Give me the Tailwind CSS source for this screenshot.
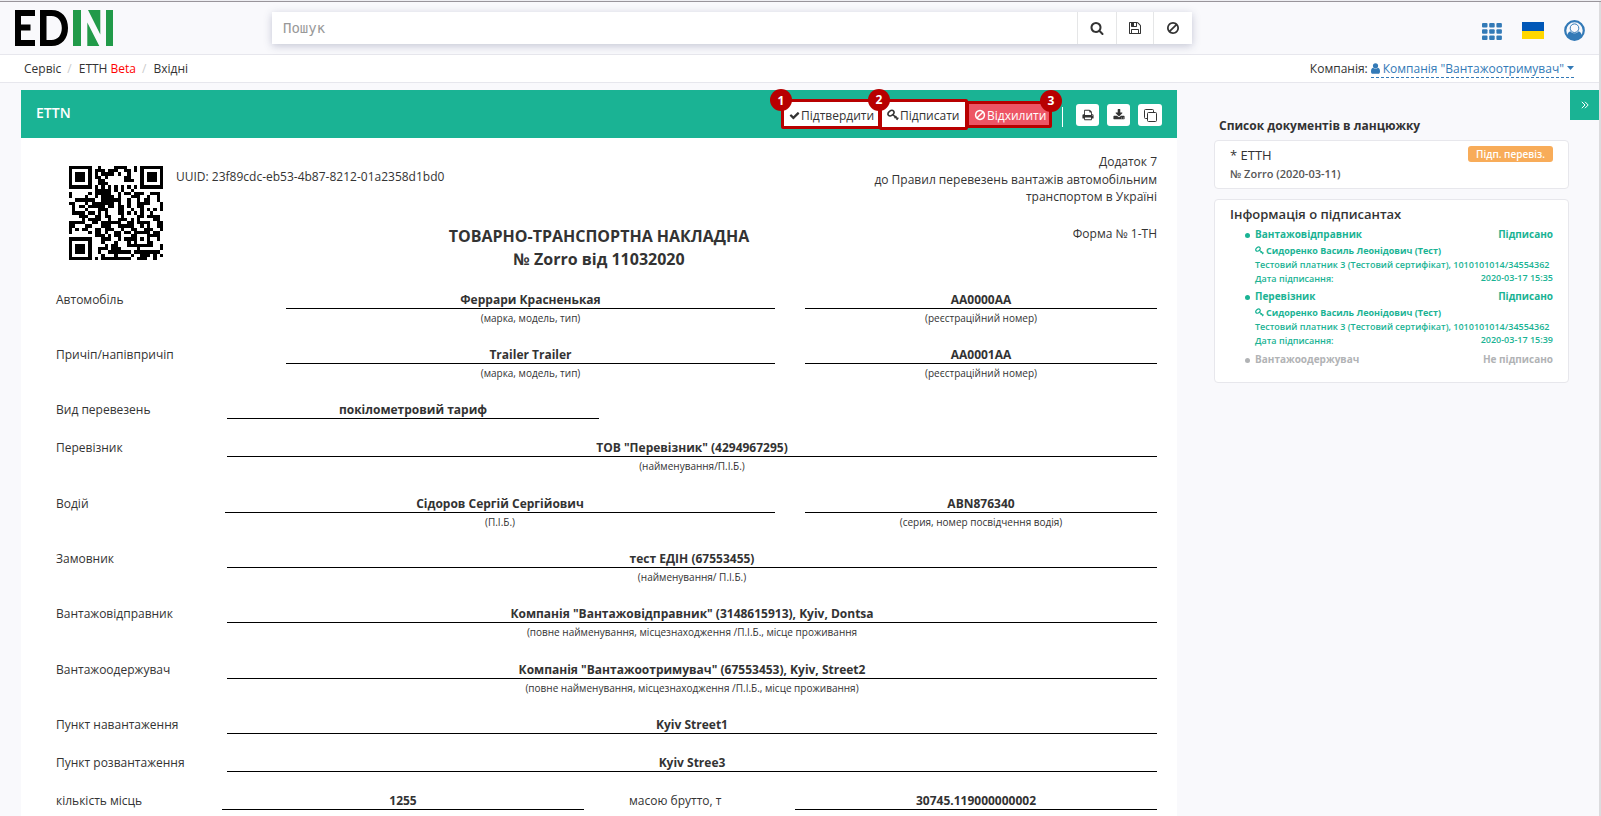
<!DOCTYPE html>
<html lang="uk">
<head>
<meta charset="utf-8">
<title>EDIN</title>
<script src="https://cdn.jsdelivr.net/npm/@tailwindcss/browser@4"></script>
</head>
<body class="h-[816px] overflow-hidden bg-[#f9f9fc] font-['Open_Sans','Noto_Sans',sans-serif] text-[12px] leading-[17px] text-[#333]">
<svg class="hidden">
  <symbol id="check" viewBox="0 0 1792 1792"><path d="M1671 566q0 40-28 68l-724 724-136 136q-28 28-68 28t-68-28l-136-136-362-362q-28-28-28-68t28-68l136-136q28-28 68-28t68 28l294 295 656-657q28-28 68-28t68 28l136 136q28 28 28 68z"/></symbol>
  <symbol id="ban" viewBox="0 0 1792 1792"><path d="M1440 893q0-161-87-295l-754 753q137 89 297 89 111 0 211.500-43.500t173.500-116.500 116-174.500 43-212.500zm-999 299l755-754q-135-91-300-91-148 0-273 73t-198 199-73 274q0 162 89 299zm1223-299q0 157-61 300t-163.500 246-245 164-298.500 61-298.500-61-245-164-163.500-246-61-300 61-299.500 163.500-245.500 245-164 298.500-61 298.500 61 245 164 163.500 245.500 61 299.500z"/></symbol>
  <symbol id="search" viewBox="0 0 1792 1792"><path d="M1216 832q0-185-131.500-316.500t-316.500-131.500-316.500 131.500-131.500 316.500 131.500 316.500 316.500 131.500 316.500-131.500 131.500-316.500zm512 832q0 52-38 90t-90 38q-54 0-90-38l-343-342q-179 124-399 124-143 0-273.500-55.500t-225-150-150-225-55.500-273.500 55.500-273.500 150-225 225-150 273.500-55.500 273.500 55.500 225 150 150 225 55.500 273.500q0 220-124 399l343 343q37 37 37 90z"/></symbol>
  <symbol id="save" viewBox="0 0 1792 1792"><path d="M512 1536h768v-384h-768v384zm896 0h128v-896q0-14-10-38.500t-20-34.500l-281-281q-10-10-34-20t-39-10v416q0 40-28 68t-68 28h-576q-40 0-68-28t-28-68v-416h-128v1280h128v-416q0-40 28-68t68-28h832q40 0 68 28t28 68v416zm-384-928v-320q0-13-9.500-22.500t-22.500-9.500h-192q-13 0-22.500 9.500t-9.500 22.500v320q0 13 9.500 22.500t22.500 9.500h192q13 0 22.500-9.500t9.500-22.500zm640 32v928q0 40-28 68t-68 28h-1344q-40 0-68-28t-28-68v-1344q0-40 28-68t68-28h928q40 0 88 20t76 48l280 280q28 28 48 76t20 88z"/></symbol>
  <symbol id="print" viewBox="0 0 1792 1792"><path d="M448 1536h896v-256h-896v256zm0-640h896v-384h-160q-40 0-68-28t-28-68v-160h-640v640zm1152 64q0-26-19-45t-45-19-45 19-19 45 19 45 45 19 45-19 19-45zm128 0v416q0 13-9.500 22.500t-22.500 9.500h-224v160q0 40-28 68t-68 28h-960q-40 0-68-28t-28-68v-160h-224q-13 0-22.500-9.500t-9.500-22.500v-416q0-79 56.500-135.500t135.500-56.500h64v-544q0-40 28-68t68-28h672q40 0 88 20t76 48l152 152q28 28 48 76t20 88v256h64q79 0 135.500 56.500t56.500 135.500z"/></symbol>
  <symbol id="download" viewBox="0 0 1792 1792"><path d="M1344 1344q0-26-19-45t-45-19-45 19-19 45 19 45 45 19 45-19 19-45zm256 0q0-26-19-45t-45-19-45 19-19 45 19 45 45 19 45-19 19-45zm128-224v320q0 40-28 68t-68 28h-1472q-40 0-68-28t-28-68v-320q0-40 28-68t68-28h465l135 136q58 56 136 56t136-56l136-136h464q40 0 68 28t28 68zm-325-569q17 41-14 70l-448 448q-18 19-45 19t-45-19l-448-448q-31-29-14-70 17-39 59-39h256v-448q0-26 19-45t45-19h256q26 0 45 19t19 45v448h256q42 0 59 39z"/></symbol>
  <symbol id="key" viewBox="0 0 12 12"><g fill="none" stroke="currentColor"><ellipse cx="4" cy="4.200" rx="3.300" ry="2.300" transform="rotate(-40 4 4.200)" stroke-width="1.600"/><path d="M5.800 5.600l5 4.400" stroke-width="1.500"/><path d="M11.300 8.600L9.600 10.900M9.300 7L7.600 9.200" stroke-width="1.400"/></g></symbol>
</svg>

<div class="h-px bg-[#eeeef2]"></div>
<div class="h-px bg-[#99959b]"></div>
<div class="flex h-[814px] flex-col border-r-2 border-[#dcdcde]">

  <header class="flex h-[53px] shrink-0 items-start border-b border-[#e7e7ed] bg-[#f9f9fc] pl-[15px] pr-[14px]">
    <svg class="mt-2 shrink-0" width="98" height="36" viewBox="0 0 98 36">
      <path d="M0 0h20v6H6v8.500h9.500v6H6V30h14v6H0zM25 0h11.500C47 0 53 7.500 53 18s-6 18-16.500 18H25zM31.500 6v24h5c6.500 0 10.300-5 10.300-12S43 6 36.500 6z" fill="#000"/>
      <path d="M58 0h8v36h-8zM91 0h7v36h-7zM73 0h12.300v24.500zM72.300 12.500L84.300 36h-12z" fill="#219a49"/>
    </svg>
    <div class="ml-[159px] mt-[10px] flex h-8 w-[920px] divide-x divide-[#e5e6e7] bg-white shadow-[0_2px_8px_rgba(60,70,110,0.28)]">
      <div class="flex-1 pl-[11px] font-['DejaVu_Sans_Mono','Liberation_Mono',monospace] text-[14px] leading-8 text-[#999]">Пошук</div>
      <div class="flex w-[39px] items-center justify-center"><svg class="size-[14px]" fill="currentColor"><use href="#search"/></svg></div>
      <div class="flex w-[37px] items-center justify-center"><svg class="size-[14px]" fill="currentColor"><use href="#save"/></svg></div>
      <div class="flex w-[38px] items-center justify-center"><svg class="size-[14px]" fill="currentColor"><use href="#ban"/></svg></div>
    </div>
    <div class="ml-auto mt-[19px] flex items-center">
      <svg width="20" height="17" viewBox="0 0 20 17" fill="#337ab7"><rect width="5.500" height="4.500" rx="1"/><rect x="7.200" width="5.500" height="4.500" rx="1"/><rect x="14.400" width="5.500" height="4.500" rx="1"/><rect y="6.200" width="5.500" height="4.500" rx="1"/><rect x="7.200" y="6.200" width="5.500" height="4.500" rx="1"/><rect x="14.400" y="6.200" width="5.500" height="4.500" rx="1"/><rect y="12.400" width="5.500" height="4.500" rx="1"/><rect x="7.200" y="12.400" width="5.500" height="4.500" rx="1"/><rect x="14.400" y="12.400" width="5.500" height="4.500" rx="1"/></svg>
      <div class="-mt-[2px] ml-5 h-[17px] w-[22px] bg-[linear-gradient(#0057b7_50%,#ffd700_50%)]"></div>
      <svg class="-mt-px ml-5" width="21" height="21" viewBox="0 0 21 21"><circle cx="10.500" cy="10.500" r="9.300" fill="none" stroke="#337ab7" stroke-width="2.200"/><path d="M3 15.500c.8-2.800 2-4 3.400-4.300 2.300 2.800 5.900 2.800 8.200 0 1.400.3 2.600 1.500 3.400 4.300-1.800 2.900-4.400 4.500-7.500 4.500S4.800 18.400 3 15.500z" fill="#337ab7"/><circle cx="10.500" cy="8.200" r="4.300" fill="#f9f9fc" stroke="#337ab7" stroke-width="1"/></svg>
    </div>
  </header>

  <nav class="flex h-7 shrink-0 items-center justify-between border-b border-[#e7e7ed] bg-white pl-6 pr-[25px]">
    <div class="flex">
      <span>Сервіс</span><span class="ml-[6px] text-[#ccc]">/</span>
      <span class="ml-[7px]">ЕТТН <span class="text-[#f00]">Beta</span></span><span class="ml-[6px] text-[#ccc]">/</span>
      <span class="ml-[7px]">Вхідні</span>
    </div>
    <div class="flex">
      <span>Компанія:</span>
      <span class="ml-[3px] flex h-[18px] items-center border-b border-dashed border-[#337ab7] text-[#337ab7]">
        <svg class="mr-[3px]" width="9" height="11" viewBox="0 0 9 11" fill="currentColor"><circle cx="4.500" cy="2.800" r="2.600"/><path d="M2 4.800c1.500 1.400 3.500 1.400 5 0 1.400.3 2 1.700 2 3.700 0 1.500-.7 2.300-1.700 2.300H1.700C.7 10.800 0 10 0 8.500c0-2 .6-3.400 2-3.700z"/></svg>
        Компанія "Вантажоотримувач"
        <svg class="ml-[3px]" width="7" height="4" viewBox="0 0 7 4" fill="currentColor"><path d="M0 0h7L3.500 4z"/></svg>
      </span>
    </div>
  </nav>

  <div class="flex flex-1 items-start pl-[21px] pt-[7px]">
    <main class="h-[726px] w-[1156px] shrink-0 bg-white">
      <div class="relative flex h-12 items-center bg-[#1ab394] pl-[15px] pr-[15px]">
        <h1 class="-mt-[3px] text-[14px] font-semibold text-white">ETTN</h1>
        <div class="relative ml-auto flex h-[31px] items-center">
          <div class="relative flex h-[30px] w-[100px] items-center rounded-[2px] border-[3px] border-[#b80000] bg-white pl-[5px] pt-[2px]">
            <svg class="mr-[1px] size-[11px]" fill="currentColor"><use href="#check"/></svg>Підтвердити
            <b class="absolute -left-[14px] -top-[13px] z-10 flex size-[22px] items-center justify-center rounded-full bg-[#b80000] text-[12px] text-white">1</b>
          </div>
          <div class="relative -ml-[2px] flex h-[31px] w-[89px] items-center rounded-[2px] border-[3px] border-[#b80000] bg-white pl-[5px] pt-[2px]">
            <svg class="mr-[1px] size-3"><use href="#key"/></svg>Підписати
            <b class="absolute -left-[14px] -top-[13px] z-10 flex size-[22px] items-center justify-center rounded-full bg-[#b80000] text-[12px] text-white">2</b>
          </div>
          <div class="relative -ml-[2px] flex h-[27px] w-[86px] items-center rounded-[2px] border-[3px] border-[#b80000] bg-[#ed5565] pl-[5px] pt-[2px] text-white">
            <svg class="mr-[1px] size-3" fill="currentColor"><use href="#ban"/></svg>Відхилити
            <b class="absolute -right-[13px] -top-[14px] z-10 flex size-[22px] items-center justify-center rounded-full bg-[#b80000] text-[12px] text-white">3</b>
          </div>
        </div>
        <div class="ml-[10px] mt-[5px] h-5 w-px bg-white"></div>
        <div class="ml-[13px] mt-[2px] flex gap-2">
          <div class="flex h-[22px] w-[23px] items-center justify-center rounded-[3px] bg-white"><svg class="size-3" fill="currentColor"><use href="#print"/></svg></div>
          <div class="flex h-[22px] w-[23px] items-center justify-center rounded-[3px] bg-white"><svg class="size-3" fill="currentColor"><use href="#download"/></svg></div>
          <div class="flex h-[22px] w-6 items-center justify-center rounded-[3px] bg-white"><svg width="13" height="13" viewBox="0 0 13 13" fill="none" stroke="#333"><rect x="3.500" y="3.500" width="9" height="9" rx="1"/><path d="M3.500 9.500h-2a1 1 0 0 1-1-1v-7a1 1 0 0 1 1-1h7a1 1 0 0 1 1 1v2"/></svg></div>
        </div>
      </div>

      <div class="px-[35px] pr-5">
        <div class="flex h-[87px]">
          <div class="w-[107px] shrink-0 pl-[13px] pt-7"><svg width="94" height="94" viewBox="0 0 29 29" shape-rendering="crispEdges"><path id="qr"/></svg></div>
          <div class="pl-[13px] pt-[30px]">UUID: 23f89cdc-eb53-4b87-8212-01a2358d1bd0</div>
          <div class="ml-auto w-[300px] pt-[15px] text-right leading-[17.500px]">Додаток 7<br>до Правил перевезень вантажів автомобільним транспортом в Україні</div>
        </div>
        <div class="flex h-[64px]">
          <h2 class="ml-[343px] w-[400px] text-center text-[16px] font-bold leading-[23px]">ТОВАРНО-ТРАНСПОРТНА НАКЛАДНА<br>№ Zorro від 11032020</h2>
          <div class="flex-1 text-right">Форма № 1-ТН</div>
        </div>

        <div id="rows"></div>
      </div>
    </main>

    <aside class="ml-[37px] w-[355px] shrink-0 pt-[27px]">
      <h3 class="pl-[5px] font-bold">Список документів в ланцюжку</h3>
      <div class="mt-[6px] flex h-[49px] justify-between rounded-[4px] border border-[#e7e7ec] bg-white pl-[15px] pr-[15px] pt-[5px]">
        <div>
          <div class="text-[13px] font-medium leading-[19px]">* ЕТТН</div>
          <div class="text-[11px] font-semibold text-[#555]">№ Zorro (2020-03-11)</div>
        </div>
        <div class="flex h-4 w-[85px] items-center justify-center rounded-[3px] bg-[#f8ac59] text-[10px] font-semibold text-white">Підп. перевіз.</div>
      </div>
      <div class="mt-[10px] h-[184px] rounded-[4px] border border-[#e7e7ec] bg-white px-[15px] pt-[5px]">
        <h4 class="text-[13px] font-semibold leading-[18px]">Інформація о підписантах</h4>
        <ul id="signers" class="mt-[3px] pl-[15px] text-[#1ab394]"></ul>
      </div>
    </aside>
    <div class="ml-px flex h-[30px] w-[29px] shrink-0 items-center justify-center bg-[#1ab394] text-white"><svg width="8" height="8" viewBox="0 0 8 8" fill="none" stroke="currentColor"><path d="M.8.8L4 4 .8 7.200M4 .8L7.200 4 4 7.200"/></svg></div>
  </div>
</div>

<script>
// Form rows: [row height, label, label width, cells: [left margin, width, value, caption]]
const rows = [
  [55, 'Автомобіль', 230, [[0, 489, 'Феррари Красненькая', '(марка, модель, тип)'], [30, 352, 'AA0000AA', '(реєстраційний номер)']]],
  [55, 'Причіп/напівпричіп', 230, [[0, 489, 'Trailer Trailer', '(марка, модель, тип)'], [30, 352, 'AA0001AA', '(реєстраційний номер)']]],
  [38, 'Вид перевезень', 171, [[0, 372, 'покілометровий тариф', '']]],
  [56, 'Перевізник', 171, [[0, 930, 'ТОВ "Перевізник" (4294967295)', '(найменування/П.І.Б.)']]],
  [55, 'Водій', 169, [[0, 550, 'Сідоров Сергій Сергійович', '(П.І.Б.)'], [30, 352, 'ABN876340', '(серия, номер посвідчення водія)']]],
  [55, 'Замовник', 171, [[0, 930, 'тест ЕДІН (67553455)', '(найменування/ П.І.Б.)']]],
  [56, 'Вантажовідправник', 171, [[0, 930, 'Компанія "Вантажовідправник" (3148615913), Kyiv, Dontsa', '(повне найменування, місцезнаходження /П.І.Б., місце проживання']]],
  [55, 'Вантажоодержувач', 171, [[0, 930, 'Компанія "Вантажоотримувач" (67553453), Kyiv, Street2', '(повне найменування, місцезнаходження /П.І.Б., місце проживання)']]],
  [38, 'Пункт навантаження', 171, [[0, 930, 'Kyiv Street1', '']]],
  [38, 'Пункт розвантаження', 171, [[0, 930, 'Kyiv Stree3', '']]],
  [38, 'кількість місць', 166, [[0, 362, '1255', ''], [45, 166, null, 'масою брутто, т'], [0, 362, '30745.119000000002', '']]],
];
document.getElementById('rows').innerHTML = rows.map(([h, label, lw, cells]) =>
  `<div class="flex" style="height:${h}px"><div class="shrink-0 pt-[2px]" style="width:${lw}px">${label}</div>` +
  cells.map(([ml, w, v, cap]) => v === null
    ? `<div class="shrink-0 pt-[2px]" style="width:${w}px;margin-left:${ml}px">${cap}</div>`
    : `<div class="shrink-0 text-center" style="width:${w}px;margin-left:${ml}px"><div class="h-5 border-b border-black pt-[2px] font-bold">${v}</div><div class="pt-[1px] text-[10px]">${cap}</div></div>`).join('') +
  '</div>').join('');

const signed = (role, date) => `<li class="h-[62px] pl-[10px]">
  <div class="relative flex justify-between text-[10px] font-bold leading-[17px]"><i class="absolute -left-[10px] top-[7px] size-[5px] rounded-full bg-[#1ab394]"></i><span>${role}</span><span>Підписано</span></div>
  <div class="flex h-[14px] items-center text-[9px] font-bold"><svg class="mr-[2px] size-[9px]"><use href="#key"/></svg>Сидоренко Василь Леонідович (Тест)</div>
  <div class="text-[9px] font-semibold leading-[15px]">Тестовий платник 3 (Тестовий сертифікат), 1010101014/34554362</div>
  <div class="flex justify-between text-[9px] font-semibold leading-[14px]"><span>Дата підписання:</span><span class="-mt-px">${date}</span></div></li>`;
document.getElementById('signers').innerHTML = signed('Вантажовідправник', '2020-03-17 15:35') + signed('Перевізник', '2020-03-17 15:39') +
  `<li class="relative flex justify-between pl-[10px] pt-px text-[10px] font-bold text-[#b1b3b5]"><i class="absolute left-0 top-2 size-[5px] rounded-full bg-[#b1b3b5]"></i><span>Вантажоодержувач</span><span>Не підписано</span></li>`;

// QR code, version 3 (29 modules), single error correction block
function qr(text, ecBits, ecLen, mask) {
  const N = 29, dl = 70 - ecLen;
  let bits = '0100' + text.length.toString(2).padStart(8, '0');
  for (const c of text) bits += c.charCodeAt(0).toString(2).padStart(8, '0');
  bits += '0000';
  const d = bits.match(/.{8}/g).map(b => parseInt(b, 2));
  for (let i = 0; d.length < dl; i++) d.push(i % 2 ? 17 : 236);
  const E = [], L = [];
  for (let i = 0, x = 1; i < 255; i++) { E[i] = x; L[x] = i; x <<= 1; if (x > 255) x ^= 285; }
  const mul = (a, b) => a && b ? E[(L[a] + L[b]) % 255] : 0;
  let g = [1];
  for (let i = 0; i < ecLen; i++) { const n = [...g, 0]; for (let j = 0; j < g.length; j++) n[j + 1] ^= mul(g[j], E[i]); g = n; }
  const r = [...d, ...Array(ecLen).fill(0)];
  for (let i = 0; i < dl; i++) { const f = r[i]; for (let j = 0; j < g.length; j++) r[i + j] ^= mul(g[j], f); }
  const all = [...d, ...r.slice(dl)].map(v => v.toString(2).padStart(8, '0')).join('');
  const M = Array.from({length: N}, () => Array(N).fill(null));
  const finder = (r0, c0) => { for (let r = -1; r < 8; r++) for (let c = -1; c < 8; c++) { const y = r0 + r, x = c0 + c; if (y < 0 || x < 0 || y >= N || x >= N) continue; const k = Math.max(Math.abs(r - 3), Math.abs(c - 3)); M[y][x] = k != 2 && k < 4 ? 1 : 0; } };
  finder(0, 0); finder(0, N - 7); finder(N - 7, 0);
  for (let r = -2; r < 3; r++) for (let c = -2; c < 3; c++) M[22 + r][22 + c] = Math.max(Math.abs(r), Math.abs(c)) != 1 ? 1 : 0;
  for (let i = 8; i < N - 8; i++) M[6][i] = M[i][6] = i % 2 ? 0 : 1;
  let f = ecBits << 3 | mask, rem = f;
  for (let i = 0; i < 10; i++) rem = (rem << 1) ^ ((rem >> 9) * 0x537);
  f = (f << 10 | rem) ^ 0x5412;
  const b = i => f >> i & 1;
  for (let i = 0; i < 6; i++) M[i][8] = b(i);
  M[7][8] = b(6); M[8][8] = b(7); M[8][7] = b(8);
  for (let i = 9; i < 15; i++) M[8][14 - i] = b(i);
  for (let i = 0; i < 8; i++) M[8][N - 1 - i] = b(i);
  for (let i = 8; i < 15; i++) M[N - 15 + i][8] = b(i);
  M[N - 8][8] = 1;
  let k = 0, up = true;
  for (let c = N - 1; c > 0; c -= 2) {
    if (c == 6) c = 5;
    for (let i = 0; i < N; i++) { const r = up ? N - 1 - i : i; for (const x of [c, c - 1]) if (M[r][x] === null) { const v = k < all.length ? +all[k] : 0; k++; M[r][x] = v ^ (r * x % 2 + r * x % 3 == 0 ? 1 : 0); } }
    up = !up;
  }
  let p = '';
  M.forEach((row, y) => row.forEach((v, x) => { if (v) p += `M${x} ${y}h1v1h-1z`; }));
  return p;
}
document.getElementById('qr').setAttribute('d', qr('23f89cdc-eb53-4b87-8212-01a2358d1bd0', 0, 26, 5));
</script>
</body>
</html>
